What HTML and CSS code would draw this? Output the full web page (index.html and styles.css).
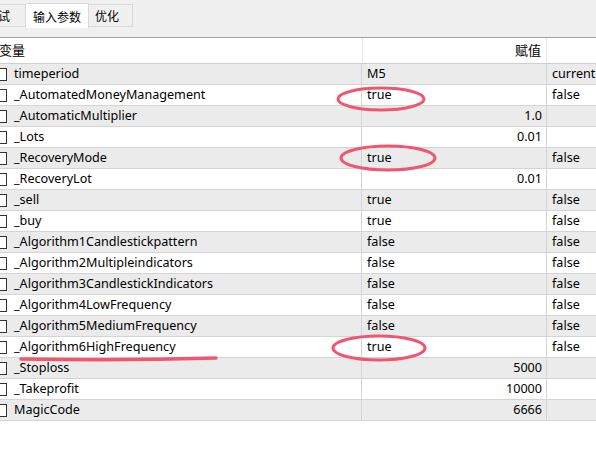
FILE: index.html
```html
<!DOCTYPE html>
<html lang="zh">
<head>
<meta charset="utf-8">
<title>输入参数</title>
<link rel="stylesheet" href="styles.css">
</head>
<body>
<div class="page">
  <div class="tabs">
    <div class="tab tab-cut">试</div>
    <div class="tab tab-active">输入参数</div>
    <div class="tab tab-opt">优化</div>
  </div>
  <div class="grid">
    <div class="row head">
      <div class="c1"><span class="head-name">变量</span></div>
      <div class="c2 right">赋值</div>
      <div class="c3"></div>
    </div>
    <div class="row alt"><div class="c1"><span class="cb"></span>timeperiod</div><div class="c2">M5</div><div class="c3">currentPeriod</div></div>
    <div class="row"><div class="c1"><span class="cb"></span>_AutomatedMoneyManagement</div><div class="c2">true</div><div class="c3">false</div></div>
    <div class="row alt"><div class="c1"><span class="cb"></span>_AutomaticMultiplier</div><div class="c2 right">1.0</div><div class="c3"></div></div>
    <div class="row"><div class="c1"><span class="cb"></span>_Lots</div><div class="c2 right">0.01</div><div class="c3"></div></div>
    <div class="row alt"><div class="c1"><span class="cb"></span>_RecoveryMode</div><div class="c2">true</div><div class="c3">false</div></div>
    <div class="row"><div class="c1"><span class="cb"></span>_RecoveryLot</div><div class="c2 right">0.01</div><div class="c3"></div></div>
    <div class="row alt"><div class="c1"><span class="cb"></span>_sell</div><div class="c2">true</div><div class="c3">false</div></div>
    <div class="row"><div class="c1"><span class="cb"></span>_buy</div><div class="c2">true</div><div class="c3">false</div></div>
    <div class="row alt"><div class="c1"><span class="cb"></span>_Algorithm1Candlestickpattern</div><div class="c2">false</div><div class="c3">false</div></div>
    <div class="row"><div class="c1"><span class="cb"></span>_Algorithm2Multipleindicators</div><div class="c2">false</div><div class="c3">false</div></div>
    <div class="row alt"><div class="c1"><span class="cb"></span>_Algorithm3CandlestickIndicators</div><div class="c2">false</div><div class="c3">false</div></div>
    <div class="row"><div class="c1"><span class="cb"></span>_Algorithm4LowFrequency</div><div class="c2">false</div><div class="c3">false</div></div>
    <div class="row alt"><div class="c1"><span class="cb"></span>_Algorithm5MediumFrequency</div><div class="c2">false</div><div class="c3">false</div></div>
    <div class="row"><div class="c1"><span class="cb"></span>_Algorithm6HighFrequency</div><div class="c2">true</div><div class="c3">false</div></div>
    <div class="row alt"><div class="c1"><span class="cb"></span>_Stoploss</div><div class="c2 right">5000</div><div class="c3"></div></div>
    <div class="row"><div class="c1"><span class="cb"></span>_Takeprofit</div><div class="c2 right">10000</div><div class="c3"></div></div>
    <div class="row alt"><div class="c1"><span class="cb"></span>MagicCode</div><div class="c2 right">6666</div><div class="c3"></div></div>
  </div>
  <svg class="marks" width="596" height="452" viewBox="0 0 596 452">
    <ellipse cx="381" cy="99" rx="43" ry="11" fill="none" stroke="#f2566f" stroke-width="3"/>
    <ellipse cx="388" cy="158" rx="47" ry="12" fill="none" stroke="#f2566f" stroke-width="3"/>
    <ellipse cx="379" cy="348" rx="46" ry="12" fill="none" stroke="#f2566f" stroke-width="3"/>
    <path d="M21 359 Q120 361 216 358" fill="none" stroke="#f2566f" stroke-width="3.5" stroke-linecap="round"/>
  </svg>
</div>
</body>
</html>
```

FILE: styles.css
```css
html, body {
  margin: 0;
  padding: 0;
  background: #ffffff;
}
.page {
  position: relative;
  width: 596px;
  height: 452px;
  overflow: hidden;
  font-family: "Noto Sans", "Noto Sans CJK SC", sans-serif;
  font-size: 12.6px;
  color: #000;
}
.tabs {
  display: flex;
  align-items: flex-end;
  height: 38px;
  box-sizing: border-box;
  padding-bottom: 10px;
  background: #f0f0f0;
  border-bottom: 1px solid #a0a0a0;
}
.tab {
  box-sizing: border-box;
  height: 23px;
  padding: 0 6px;
  display: flex;
  align-items: center;
  white-space: nowrap;
  border: 1px solid #d9d9d9;
  border-left: none;
  font-family: "Noto Sans CJK SC", sans-serif;
  font-size: 12px;
  background: #f0f0f0;
}
.tab-cut {
  width: 26px;
  padding: 0 15px 0 0;
  justify-content: flex-end;
}
.tab-active {
  height: 25px;
  background: #ffffff;
  padding: 0 7px;
  margin-bottom: -1px;
  border-bottom: none;
}
.tab-opt {
  width: 44px;
}
.row {
  display: flex;
  height: 21px;
  box-sizing: border-box;
  border-bottom: 1px solid #d4d4d4;
  background: #ffffff;
}
.row.alt {
  background: #ebebeb;
}
.row.head {
  height: 26px;
  background: #ffffff;
  border-bottom-color: #cfcfcf;
}
.c1, .c2, .c3 {
  box-sizing: border-box;
  display: flex;
  align-items: center;
  white-space: nowrap;
  overflow: hidden;
  padding-bottom: 2px;
}
.c1 {
  width: 362px;
  border-right: 1px solid #d4d4d4;
}
.c2 {
  width: 185px;
  padding-left: 5px;
  padding-right: 4px;
  border-right: 1px solid #d4d4d4;
}
.c3 {
  flex: 1;
  padding-left: 5px;
}
.head .c1, .head .c2 {
  border-right-color: #e6e6e6;
}
.head .c1 {
  width: 363px;
}
.head .c2 {
  width: 184px;
  padding-right: 5px;
  font-family: "Noto Sans CJK SC", sans-serif;
  font-size: 13px;
}
.head-name {
  margin-left: -1px;
  font-family: "Noto Sans CJK SC", sans-serif;
  font-size: 13px;
}
.right {
  justify-content: flex-end;
}
.cb {
  flex: none;
  width: 13px;
  height: 13px;
  box-sizing: border-box;
  border: 1px solid #333;
  background: #fff;
  margin-left: -6px;
  margin-right: 7px;
  margin-top: 2px;
}
.marks {
  position: absolute;
  left: 0;
  top: 0;
  pointer-events: none;
}
```
